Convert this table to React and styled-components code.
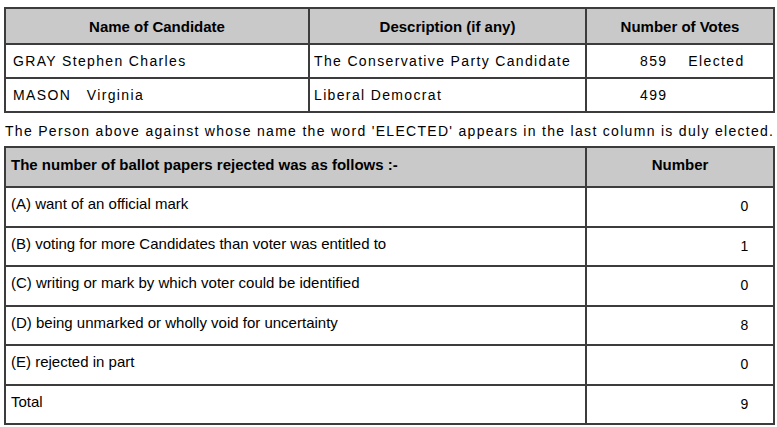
import styled, { createGlobalStyle } from "styled-components"

const GlobalStyle = createGlobalStyle`
  body {
    margin: 0;
    background: #fff;
    color: #000;
    font-family: "Liberation Sans", Arial, sans-serif;
  }
`

const Page = styled.div`
  padding: 7px 4px 0 4px;
  width: 769px;
`

const Table = styled.table`
  width: 769px;
  border-collapse: collapse;
  table-layout: fixed;
  border: 2px solid #3c3c3c;
`

const HeadCell = styled.th`
  background: #c9c9c9;
  border: 2px solid #3c3c3c;
  font-weight: bold;
  font-size: 15px;
  text-align: ${p => p.align || "center"};
  padding: 0 5px ${p => p.lift || 0}px 5px;
  height: ${p => p.h}px;
`

const VoteCell = styled.td`
  border: 2px solid #3c3c3c;
  font-size: 14px;
  letter-spacing: 1.35px;
  height: 32px;
  padding: 0 0 0 ${p => p.indent || 4}px;
  white-space: pre;
`

const RejectCell = styled.td`
  border: 2px solid #3c3c3c;
  font-size: 15px;
  height: 28.5px;
  vertical-align: top;
  padding: ${p => (p.num ? "9px 24px 0 0" : "7px 0 0 5px")};
  text-align: ${p => (p.num ? "right" : "left")};
  letter-spacing: ${p => (p.num ? "0.6px" : "0")};
`

const Number = styled.span`
  font-size: 14px;
`

const Notice = styled.p`
  margin: 0;
  padding: 10px 0 7px 1px;
  font-size: 14px;
  letter-spacing: 1.3px;
  white-space: nowrap;
`

const candidates = [
  { name: "GRAY Stephen Charles", desc: "The Conservative Party Candidate", votes: "859    Elected" },
  { name: "MASON   Virginia", desc: "Liberal Democrat", votes: "499" },
]

const rejected = [
  ["(A) want of an official mark", 0],
  ["(B) voting for more Candidates than voter was entitled to", 1],
  ["(C) writing or mark by which voter could be identified", 0],
  ["(D) being unmarked or wholly void for uncertainty", 8],
  ["(E) rejected in part", 0],
  ["Total", 9],
]

export default function App() {
  return (
    <Page>
      <GlobalStyle />
      <Table>
        <colgroup>
          <col style={{ width: 304 }} />
          <col style={{ width: 277 }} />
          <col style={{ width: 188 }} />
        </colgroup>
        <thead>
          <tr>
            <HeadCell h={34}>Name of Candidate</HeadCell>
            <HeadCell h={34}>Description (if any)</HeadCell>
            <HeadCell h={34}>Number of Votes</HeadCell>
          </tr>
        </thead>
        <tbody>
          {candidates.map(c => (
            <tr key={c.name}>
              <VoteCell indent={7}>{c.name}</VoteCell>
              <VoteCell>{c.desc}</VoteCell>
              <VoteCell indent={53}>{c.votes}</VoteCell>
            </tr>
          ))}
        </tbody>
      </Table>
      <Notice>
        The Person above against whose name the word 'ELECTED' appears in the last column is duly elected.
      </Notice>
      <Table>
        <colgroup>
          <col style={{ width: 581 }} />
          <col style={{ width: 188 }} />
        </colgroup>
        <thead>
          <tr>
            <HeadCell align="left" h={32} lift={6}>The number of ballot papers rejected was as follows :-</HeadCell>
            <HeadCell h={32} lift={6}>Number</HeadCell>
          </tr>
        </thead>
        <tbody>
          {rejected.map(([label, n]) => (
            <tr key={label}>
              <RejectCell>{label}</RejectCell>
              <RejectCell num><Number>{n}</Number></RejectCell>
            </tr>
          ))}
        </tbody>
      </Table>
    </Page>
  )
}
